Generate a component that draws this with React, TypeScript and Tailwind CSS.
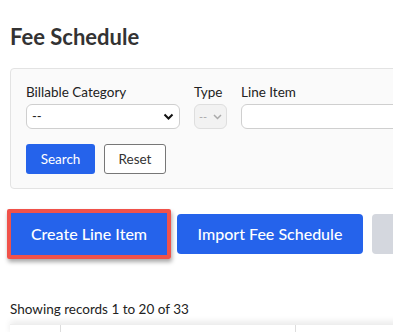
export default function App() {
  return (
    <div className="min-h-screen w-[393px] overflow-hidden bg-white font-['Lato','Liberation_Sans',sans-serif] text-[#222]">
      <div className="pl-[10px] pt-[24px]">
        <h1 className="text-[22px] font-bold leading-[26px] text-[#333]">Fee Schedule</h1>

        <div className="mt-[18px] w-[420px] rounded-[4px] border border-[#e3e3e3] bg-[#fafafa] pl-[15px] pt-[13px] pb-[14px]">
          <div className="flex gap-[14px]">
            <div className="flex shrink-0 flex-col">
              <label className="text-[13.5px] leading-[20px]">Billable Category</label>
              <div className="mt-[2px] flex h-[25px] w-[154px] items-center justify-between rounded-[6px] border border-[#cfcfcf] bg-white px-[5px]">
                <span className="text-[13px] leading-none">--</span>
                <svg width="11" height="8" viewBox="0 0 11 8" fill="none">
                  <path d="M1.5 1.5 L5.5 5.5 L9.5 1.5" stroke="#111" strokeWidth="2" />
                </svg>
              </div>
            </div>
            <div className="flex shrink-0 flex-col">
              <label className="text-[13.5px] leading-[20px]">Type</label>
              <div className="mt-[2px] flex h-[25px] w-[33px] items-center justify-between rounded-[6px] border border-[#dedede] bg-[#f2f2f2] px-[4px]">
                <span className="text-[11px] leading-none text-[#aaa]">--</span>
                <svg width="9" height="6" viewBox="0 0 9 6" fill="none">
                  <path d="M1 1 L4.5 4.5 L8 1" stroke="#aaa" strokeWidth="1.5" />
                </svg>
              </div>
            </div>
            <div className="flex shrink-0 flex-col">
              <label className="text-[13.5px] leading-[20px]">Line Item</label>
              <div className="mt-[2px] h-[25px] w-[170px] rounded-[6px] border border-[#cfcfcf] bg-white" />
            </div>
          </div>
          <div className="mt-[15px] flex gap-[9px]">
            <button className="h-[30px] w-[69px] rounded-[3px] bg-[#2563eb] text-[13.5px] text-white">Search</button>
            <button className="h-[30px] w-[62px] rounded-[3px] border border-[#777] bg-white text-[13.5px] text-[#333]">Reset</button>
          </div>
        </div>

        <div className="-ml-[3px] mt-[20px] flex items-center gap-[6px]">
          <div className="shrink-0 rounded-[2px] border-[4px] border-[#f0524a] shadow-[1px_3px_4px_rgba(0,0,0,0.35)]">
            <button className="h-[42px] w-[156px] bg-[#2563eb] text-[16px] font-medium text-white">Create Line Item</button>
          </div>
          <button className="h-[40px] w-[186px] shrink-0 rounded-[4px] bg-[#2563eb] text-[16px] font-medium text-white">Import Fee Schedule</button>
          <div className="ml-[3px] h-[40px] w-[60px] shrink-0 rounded-[4px] bg-[#d4d7de]" />
        </div>

        <p className="mt-[40px] text-[13.5px] leading-[20px] text-[#222]">Showing records 1 to 20 of 33</p>

        <div className="mt-[5px] flex h-[12px] w-[400px] border-t border-[#eee] shadow-[0_-3px_6px_rgba(0,0,0,0.08)]">
          <div className="w-[51px] border-r border-[#ddd]" />
          <div className="w-[235px] border-r border-[#ddd]" />
        </div>
      </div>
    </div>
  )
}
